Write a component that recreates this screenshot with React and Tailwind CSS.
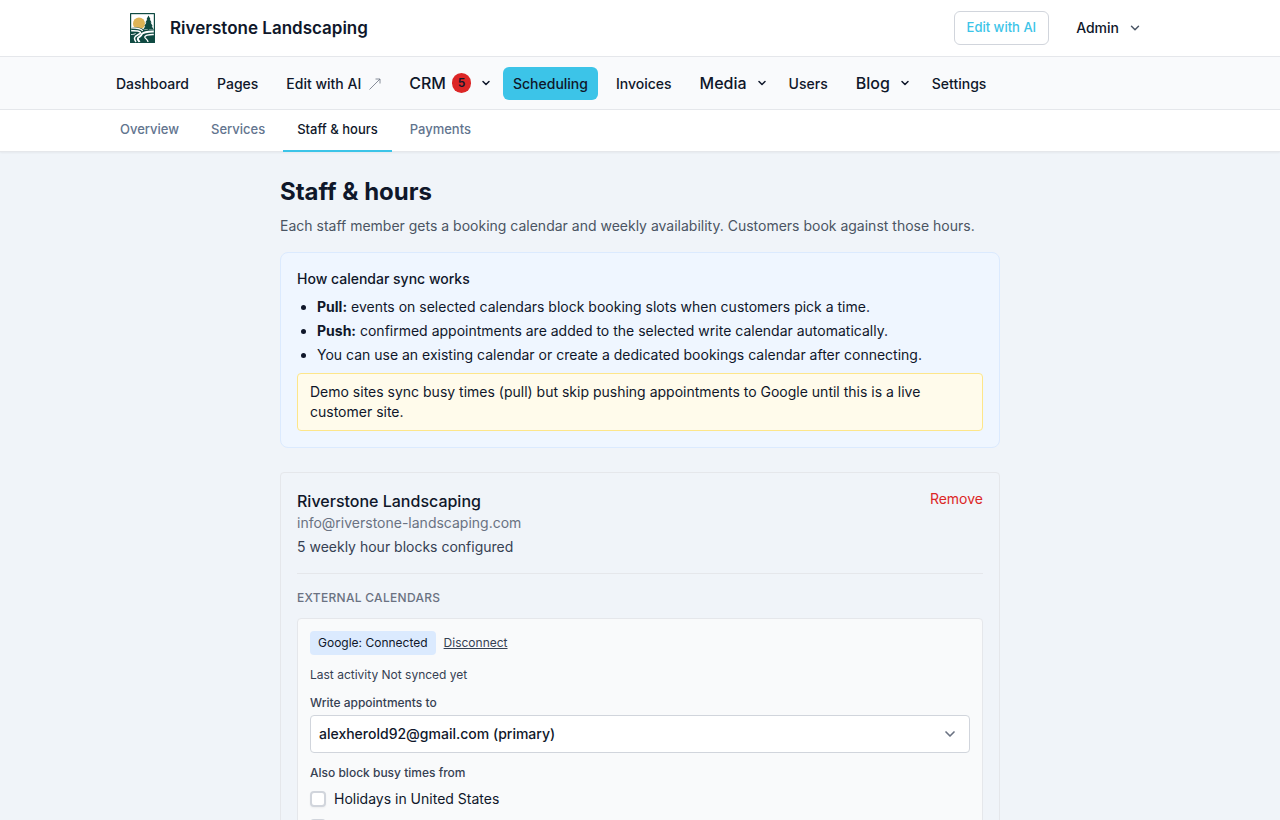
import React, { useState } from "react";
import { ChevronDown } from "lucide-react";

const navItems = [
  { label: "Dashboard" },
  { label: "Pages" },
  { label: "Edit with AI", external: true },
  { label: "CRM", menu: true, count: 5 },
  { label: "Scheduling", active: true },
  { label: "Invoices" },
  { label: "Media", menu: true },
  { label: "Users" },
  { label: "Blog", menu: true },
  { label: "Settings" },
];

const tabs = ["Overview", "Services", "Staff & hours", "Payments"];

const Logo = () => (
  <svg width="25" height="30" viewBox="0 0 25 30" aria-hidden="true">
    <rect width="25" height="30" rx="0.5" fill="#0f4a42" />
    <rect x="1.2" y="1.2" width="22.6" height="17" fill="#fff" />
    <circle cx="9" cy="10.5" r="6" fill="#dcb356" />
    <path d="M1.2 14.5C7 13.5 12 15 15 17l8.800-.500V29H1.200z" fill="#0f4a42" />
    <path
      d="M18.500 2.500l2 3.800h-.8l1.900 3.300h-1l2.200 3.600h-1.100l2.100 3.300h-4.600V19h-1.400v-2.500h-4.600l2.100-3.300h-1.100l2.200-3.600h-1l1.900-3.300h-.8z"
      fill="#0f4a42"
    />
    <path d="M1.200 14.800c5 0 10 .9 11.500 3" fill="none" stroke="#fff" strokeWidth="1.200" />
    <path d="M1.200 17.800c5-.3 9.300.4 9.300 2 0 1.500-5.500 2.200-6 5.200-.2 1.500.5 2.500 1.500 4" fill="none" stroke="#fff" strokeWidth="1.500" />
    <path d="M23.800 18.500c-6-.3-12 1.300-12.300 3.200-.2 1.700-4.200 2.300-3.700 4.300.2 1.200 1.200 1.700 1.700 3" fill="none" stroke="#fff" strokeWidth="2" />
    <path d="M23.800 21.500c-5-.2-9.300 1-9 2.700.3 1.500 3.200 2.300 3.200 4.800" fill="none" stroke="#fff" strokeWidth="1.300" />
    <path d="M1.200 21.500c2 0 3.300-.3 4.300-1" fill="none" stroke="#fff" strokeWidth="1" />
  </svg>
);

const ArrowIcon = () => (
  <svg width="12" height="12" viewBox="0 0 12 12" fill="none" stroke="#6b7280" strokeWidth="0.8" aria-hidden="true">
    <path d="M0.500 11.500L11 1M6.500 1H11v4.500" />
  </svg>
);

const Header = () => (
  <header className="bg-white border-b border-gray-200">
    <div className="max-w-[1020px] mx-auto h-14 flex items-center justify-between">
      <a href="#" className="flex items-center gap-[15px] text-[17px] leading-7 font-semibold">
        <Logo />
        Riverstone Landscaping
      </a>
      <div className="flex items-center gap-[27px] pr-2">
        <button
          type="button"
          className="h-[34px] px-3 rounded-md border border-gray-300 bg-white text-[13px] font-medium text-[#3cc4e8]"
        >
          Edit with AI
        </button>
        <button type="button" className="flex items-center gap-[9px] text-sm font-medium">
          Admin
          <ChevronDown size={14} strokeWidth={2.5} className="text-gray-600" />
        </button>
      </div>
    </div>
  </header>
);

const NavItem = ({ item }) => {
  if (item.menu) {
    return (
      <button type="button" className="flex items-center h-8 pl-[10px] pr-[3px] text-base font-medium">
        {item.label}
        {item.count && (
          <span className="ml-1.5 w-[19px] h-5 rounded-full bg-[#dc2626] text-xs font-semibold flex items-center justify-center">
            {item.count}
          </span>
        )}
        <ChevronDown size={12} strokeWidth={3} className="ml-[9px]" />
      </button>
    );
  }

  return (
    <a
      href="#"
      className={`flex items-center pt-[7px] pb-[6px] px-[10px] rounded-md text-sm font-medium ${
        item.active ? "bg-[#3cc4e8]" : ""
      }`}
    >
      {item.label}
      {item.external && (
        <span className="ml-2">
          <ArrowIcon />
        </span>
      )}
    </a>
  );
};

const App = () => {
  const [activeTab, setActiveTab] = useState("Staff & hours");
  const [calendar, setCalendar] = useState("primary");
  const [blocked, setBlocked] = useState({ holidays: false, other: false });

  const toggleBlocked = (e) =>
    setBlocked({ ...blocked, [e.target.name]: e.target.checked });

  return (
    <div className="min-h-screen bg-[#f0f4f9] text-[#0f172a] font-['Inter',sans-serif]">
      <Header />

      <nav className="bg-[#f9fafc] border-b border-gray-200">
        <div className="max-w-[1068px] mx-auto pt-[10px] pb-[9px] flex items-start gap-2">
          {navItems.map((item) => (
            <NavItem key={item.label} item={item} />
          ))}
        </div>
      </nav>

      <nav className="bg-white border-b border-gray-200 shadow-xs">
        <div className="max-w-[1068px] mx-auto flex gap-1">
          {tabs.map((tab) => (
            <button
              key={tab}
              type="button"
              onClick={() => setActiveTab(tab)}
              className={`h-[42px] -mb-px px-[14px] border-b-2 text-[13px] font-medium ${
                tab === activeTab ? "border-[#3cc4e8]" : "border-transparent text-slate-500"
              }`}
            >
              {tab}
            </button>
          ))}
        </div>
      </nav>

      <main className="max-w-3xl mx-auto p-6">
        <h1 className="text-2xl font-bold">Staff & hours</h1>
        <p className="mt-2 text-sm text-[#4b5563]">
          Each staff member gets a booking calendar and weekly availability. Customers book against those hours.
        </p>

        <section className="mt-4 p-4 rounded-lg border border-blue-100 bg-[#eff6ff] text-sm">
          <h2 className="font-medium">How calendar sync works</h2>
          <ul className="mt-2 pl-5 list-disc space-y-1">
            <li>
              <strong className="font-bold">Pull:</strong> events on selected calendars block booking slots when
              customers pick a time.
            </li>
            <li>
              <strong className="font-bold">Push:</strong> confirmed appointments are added to the selected write
              calendar automatically.
            </li>
            <li>You can use an existing calendar or create a dedicated bookings calendar after connecting.</li>
          </ul>
          <p className="mt-2 px-3 py-2 rounded-sm border border-[#fde68a] bg-[#fffbeb]">
            Demo sites sync busy times (pull) but skip pushing appointments to Google until this is a live customer
            site.
          </p>
        </section>

        <section className="mt-6 p-4 rounded-sm border border-gray-200">
          <div className="flex items-start justify-between">
            <div className="text-sm">
              <h2 className="text-base font-medium">Riverstone Landscaping</h2>
              <p className="text-gray-500">info@riverstone-landscaping.com</p>
              <p className="mt-1 text-gray-700">5 weekly hour blocks configured</p>
            </div>
            <button type="button" className="text-sm text-[#dc2626]">
              Remove
            </button>
          </div>

          <div className="mt-4 pt-4 border-t border-gray-200">
            <h3 className="text-xs font-medium uppercase tracking-wide text-gray-500">External calendars</h3>

            <div className="mt-3 p-3 rounded-sm border border-gray-200 bg-[#f9fafb] text-xs">
              <div className="flex items-center gap-2">
                <span className="px-2 py-1 rounded-sm bg-blue-100">Google: Connected</span>
                <button type="button" className="text-gray-700 underline">
                  Disconnect
                </button>
              </div>
              <p className="mt-3 text-gray-700">Last activity Not synced yet</p>

              <label htmlFor="write-calendar" className="block mt-3 font-medium text-gray-700">
                Write appointments to
              </label>
              <div className="mt-1 grid items-center">
                <select
                  id="write-calendar"
                  value={calendar}
                  onChange={(e) => setCalendar(e.target.value)}
                  className="col-start-1 row-start-1 w-full h-[38px] pl-2 pr-10 appearance-none rounded-sm border border-gray-300 bg-white text-sm font-medium"
                >
                  <option value="primary">alexherold92@gmail.com (primary)</option>
                </select>
                <ChevronDown
                  size={16}
                  strokeWidth={2.5}
                  className="col-start-1 row-start-1 justify-self-end mr-3 text-gray-500 pointer-events-none"
                />
              </div>

              <fieldset className="mt-3">
                <legend className="font-medium text-gray-700">Also block busy times from</legend>
                <div className="mt-2 space-y-2 text-sm">
                  <label className="flex items-center gap-2">
                    <input
                      type="checkbox"
                      name="holidays"
                      checked={blocked.holidays}
                      onChange={toggleBlocked}
                      className="size-4 appearance-none rounded-sm border-2 border-gray-300 bg-white shadow-xs checked:bg-[#3cc4e8]"
                    />
                    Holidays in United States
                  </label>
                  <div className="flex items-center h-5">
                    <input
                      type="checkbox"
                      name="other"
                      aria-label="Other calendar"
                      checked={blocked.other}
                      onChange={toggleBlocked}
                      className="size-4 appearance-none rounded-sm border-2 border-gray-300 bg-white shadow-xs checked:bg-[#3cc4e8]"
                    />
                  </div>
                </div>
              </fieldset>
            </div>
          </div>
        </section>
      </main>
    </div>
  );
};

export default App;
